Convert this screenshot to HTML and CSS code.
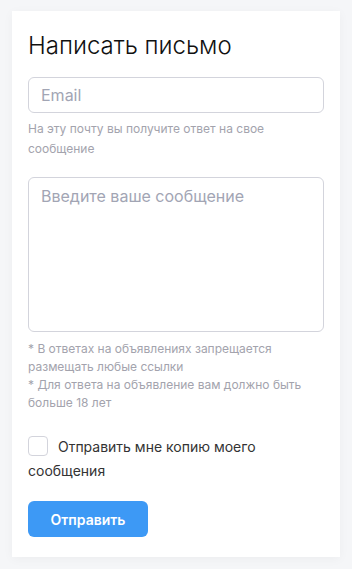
FILE: index.html
```html
<!DOCTYPE html>
<html lang="ru">
<head>
    <meta charset="UTF-8">
    <meta name="viewport" content="width=device-width, initial-scale=1.0">
    <title>Написать письмо</title>
    <link rel="stylesheet" href="styles.css">
</head>
<body>
    <!-- Message form card -->
    <div class="card">
        <h1 class="title">Написать письмо</h1>

        <form class="form">
            <input type="email" class="field" placeholder="Email">
            <p class="hint">На эту почту вы получите ответ на свое сообщение</p>

            <textarea class="field area" placeholder="Введите ваше сообщение"></textarea>
            <p class="notes">
                * В ответах на объявлениях запрещается размещать любые ссылки<br>
                * Для ответа на объявление вам должно быть больше 18 лет
            </p>

            <label class="copy">
                <input type="checkbox" class="check">
                Отправить мне копию моего сообщения
            </label>

            <button type="submit" class="send">Отправить</button>
        </form>
    </div>
</body>
</html>
```

FILE: styles.css
```css
/* General Styles */
body {
    margin: 0;
    padding: 11px 12px 12px;
    background: #f5f6f8;
    font-family: Inter, "Noto Sans", sans-serif;
    color: #222;
}

.card {
    background: #ffffff;
    padding: 20px 16px 20px;
    box-shadow: 0 2px 10px rgba(0, 0, 0, 0.04);
}

.title {
    margin: 0 0 16px;
    font-size: 24px;
    line-height: 30px;
    font-weight: 300;
    color: #111;
}

.form {
    display: flex;
    flex-direction: column;
}

.field {
    box-sizing: border-box;
    width: 100%;
    height: 36px;
    padding: 0 12px;
    border: 1px solid #d3d4dc;
    border-radius: 6px;
    font-family: inherit;
    font-size: 16px;
    color: #222;
    outline: none;
}

.field::placeholder {
    color: #a2a5b4;
}

.area {
    height: 155px;
    padding: 8px 12px;
    line-height: 20px;
    resize: none;
}

.hint {
    margin: 6px 0 18px;
    font-size: 12px;
    line-height: 20px;
    color: #a3a3ad;
}

.notes {
    margin: 8px 0 23px;
    font-size: 12px;
    line-height: 18px;
    color: #a3a3ad;
}

.copy {
    display: block;
    font-size: 14px;
    line-height: 24px;
    color: #333;
    cursor: pointer;
}

.check {
    appearance: none;
    width: 20px;
    height: 20px;
    margin: 0 6px 0 0;
    border: 1px solid #d3d4dc;
    border-radius: 4px;
    vertical-align: -4px;
    background: #fff;
}

.send {
    align-self: flex-start;
    width: 120px;
    height: 36px;
    margin-top: 18px;
    border: none;
    border-radius: 6px;
    background: #3d99f5;
    color: #ffffff;
    font-family: inherit;
    font-size: 14px;
    font-weight: 600;
    cursor: pointer;
}

.send:hover {
    background: #2f8ae6;
}
```
